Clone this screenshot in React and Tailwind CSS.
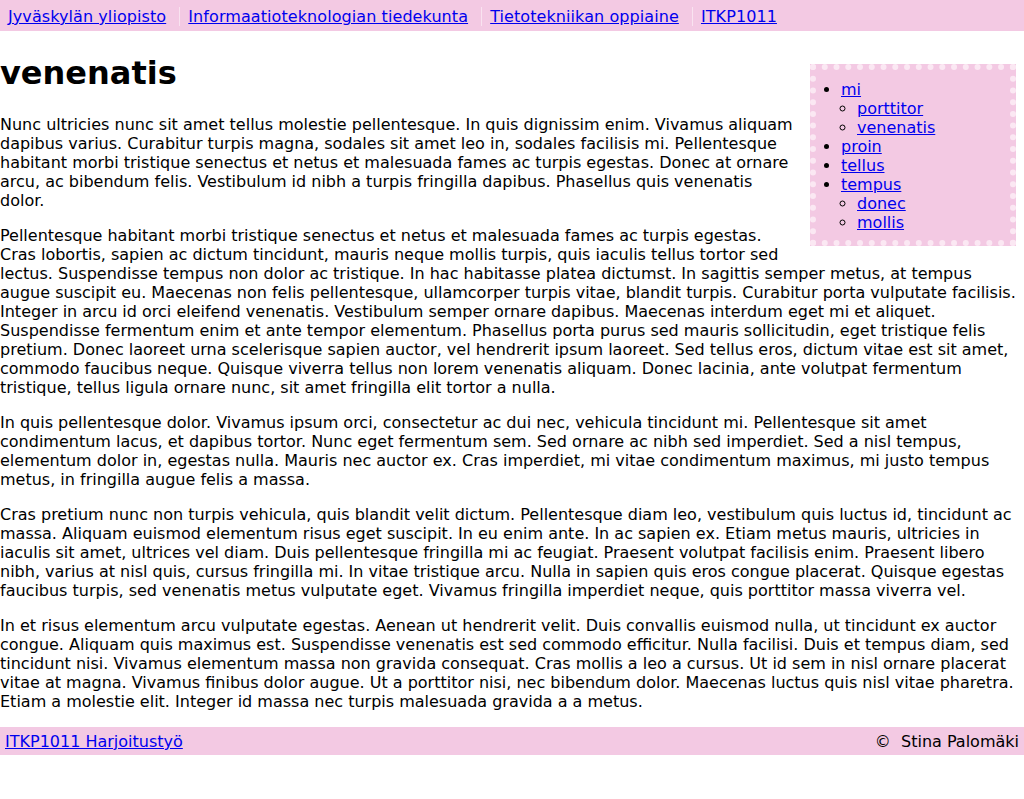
import React from "react";

const crumbs = [
  "Jyväskylän yliopisto",
  "Informaatioteknologian tiedekunta",
  "Tietotekniikan oppiaine",
  "ITKP1011",
];

const toc = [
  { label: "mi", children: ["porttitor", "venenatis"] },
  { label: "proin" },
  { label: "tellus" },
  { label: "tempus", children: ["donec", "mollis"] },
];

const paragraphs = [
  "Nunc ultricies nunc sit amet tellus molestie pellentesque. In quis dignissim enim. Vivamus aliquam dapibus varius. Curabitur turpis magna, sodales sit amet leo in, sodales facilisis mi. Pellentesque habitant morbi tristique senectus et netus et malesuada fames ac turpis egestas. Donec at ornare arcu, ac bibendum felis. Vestibulum id nibh a turpis fringilla dapibus. Phasellus quis venenatis dolor.",
  "Pellentesque habitant morbi tristique senectus et netus et malesuada fames ac turpis egestas. Cras lobortis, sapien ac dictum tincidunt, mauris neque mollis turpis, quis iaculis tellus tortor sed lectus. Suspendisse tempus non dolor ac tristique. In hac habitasse platea dictumst. In sagittis semper metus, at tempus augue suscipit eu. Maecenas non felis pellentesque, ullamcorper turpis vitae, blandit turpis. Curabitur porta vulputate facilisis. Integer in arcu id orci eleifend venenatis. Vestibulum semper ornare dapibus. Maecenas interdum eget mi et aliquet. Suspendisse fermentum enim et ante tempor elementum. Phasellus porta purus sed mauris sollicitudin, eget tristique felis pretium. Donec laoreet urna scelerisque sapien auctor, vel hendrerit ipsum laoreet. Sed tellus eros, dictum vitae est sit amet, commodo faucibus neque. Quisque viverra tellus non lorem venenatis aliquam. Donec lacinia, ante volutpat fermentum tristique, tellus ligula ornare nunc, sit amet fringilla elit tortor a nulla.",
  "In quis pellentesque dolor. Vivamus ipsum orci, consectetur ac dui nec, vehicula tincidunt mi. Pellentesque sit amet condimentum lacus, et dapibus tortor. Nunc eget fermentum sem. Sed ornare ac nibh sed imperdiet. Sed a nisl tempus, elementum dolor in, egestas nulla. Mauris nec auctor ex. Cras imperdiet, mi vitae condimentum maximus, mi justo tempus metus, in fringilla augue felis a massa.",
  "Cras pretium nunc non turpis vehicula, quis blandit velit dictum. Pellentesque diam leo, vestibulum quis luctus id, tincidunt ac massa. Aliquam euismod elementum risus eget suscipit. In eu enim ante. In ac sapien ex. Etiam metus mauris, ultricies in iaculis sit amet, ultrices vel diam. Duis pellentesque fringilla mi ac feugiat. Praesent volutpat facilisis enim. Praesent libero nibh, varius at nisl quis, cursus fringilla mi. In vitae tristique arcu. Nulla in sapien quis eros congue placerat. Quisque egestas faucibus turpis, sed venenatis metus vulputate eget. Vivamus fringilla imperdiet neque, quis porttitor massa viverra vel.",
  "In et risus elementum arcu vulputate egestas. Aenean ut hendrerit velit. Duis convallis euismod nulla, ut tincidunt ex auctor congue. Aliquam quis maximus est. Suspendisse venenatis est sed commodo efficitur. Nulla facilisi. Duis et tempus diam, sed tincidunt nisi. Vivamus elementum massa non gravida consequat. Cras mollis a leo a cursus. Ut id sem in nisl ornare placerat vitae at magna. Vivamus finibus dolor augue. Ut a porttitor nisi, nec bibendum dolor. Maecenas luctus quis nisl vitae pharetra. Etiam a molestie elit. Integer id massa nec turpis malesuada gravida a a metus.",
];

const linkClass = "text-[#0000ee] underline";

export default function App() {
  return (
    <div className="w-[1024px] min-h-[799px] bg-white text-black font-['DejaVu_Sans',sans-serif] text-base leading-normal">
      {/* breadcrumbs */}
      <nav className="bg-[#f3c9e3] pt-[7px] pb-[5px] leading-[19px]">
        <ul>
          {crumbs.map((c, i) => (
            <React.Fragment key={c}>
              {i > 0 && " "}
              <li className={`inline px-2 tracking-[0.005em] ${i > 0 ? "border-l border-[#f9e3f0]" : ""}`}>
                <a href="#" className={linkClass}>
                  {c}
                </a>
              </li>
            </React.Fragment>
          ))}
        </ul>
      </nav>

      <main className="flow-root leading-[19px]">
        <div className="float-right mt-[33px] mr-[8px] ml-[12px] mb-[8px] w-[206px] bg-[#f3c9e3] border-[6px] border-dotted border-[#fbe8f3] pt-[10px] pb-[8px] pl-[25px]">
          <ul className="list-disc">
            {toc.map((t) => (
              <li key={t.label}>
                <a href="#" className={linkClass}>
                  {t.label}
                </a>
                {t.children && (
                  <ul className="list-[circle] pl-4">
                    {t.children.map((c) => (
                      <li key={c}>
                        <a href="#" className={linkClass}>
                          {c}
                        </a>
                      </li>
                    ))}
                  </ul>
                )}
              </li>
            ))}
          </ul>
        </div>

        <h1 className="text-[32px] leading-[37px] font-bold mt-[24px] mb-[23px]">venenatis</h1>

        {paragraphs.map((p, i) => (
          <p key={i} className="mb-4">
            {p}
          </p>
        ))}
      </main>

      <footer className="bg-[#f3c9e3] px-[5px] pt-[5px] pb-[4px] leading-[19px] flex justify-between">
        <a href="#" className={linkClass}>
          ITKP1011 Harjoitustyö
        </a>
        <span>©&nbsp; Stina Palomäki</span>
      </footer>
    </div>
  );
}
